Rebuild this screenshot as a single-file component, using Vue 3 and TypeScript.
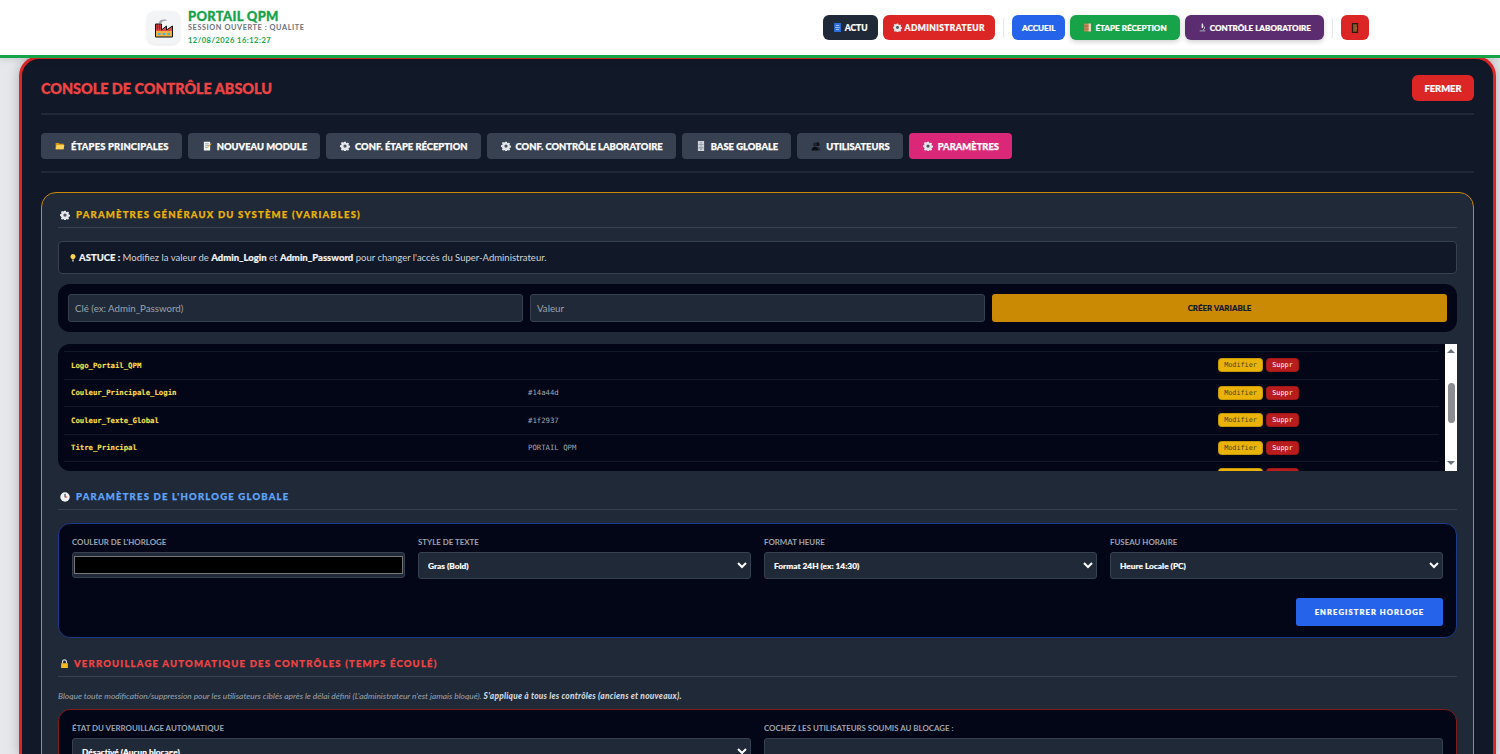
<script setup lang="ts">
const navLeft = [
  { label: 'ACTU', icon: 'news', cls: 'nav-dark' },
  { label: 'ADMINISTRATEUR', icon: 'gear', cls: 'nav-red wide' },
]
const navMain = [
  { label: 'ACCUEIL', icon: '', cls: 'nav-blue' },
  { label: 'ÉTAPE RÉCEPTION', icon: 'books', cls: 'nav-green' },
  { label: 'CONTRÔLE LABORATOIRE', icon: 'scope', cls: 'nav-purple' },
]
const tabs = [
  { label: 'ÉTAPES PRINCIPALES', icon: 'folder' },
  { label: 'NOUVEAU MODULE', icon: 'memo' },
  { label: 'CONF. ÉTAPE RÉCEPTION', icon: 'gear' },
  { label: 'CONF. CONTRÔLE LABORATOIRE', icon: 'gear' },
  { label: 'BASE GLOBALE', icon: 'cabinet' },
  { label: 'UTILISATEURS', icon: 'bust' },
  { label: 'PARAMÈTRES', icon: 'gear', active: true },
]
// last row is cut by the bottom of the box, only its buttons peek out
const variables = [
  { key: 'Logo_Portail_QPM', value: '', cut: false },
  { key: 'Couleur_Principale_Login', value: '#14a44d', cut: false },
  { key: 'Couleur_Texte_Global', value: '#1f2937', cut: false },
  { key: 'Titre_Principal', value: 'PORTAIL QPM', cut: false },
  { key: 'row-5', value: '', cut: true },
]
const clockSelects = [
  { label: 'STYLE DE TEXTE', value: 'Gras (Bold)' },
  { label: 'FORMAT HEURE', value: 'Format 24H (ex: 14:30)' },
  { label: 'FUSEAU HORAIRE', value: 'Heure Locale (PC)' },
]
</script>

<template>
  <svg class="defs" aria-hidden="true">
    <symbol id="gear" viewBox="0 0 16 16">
      <path fill="#e5e7eb" d="M6.7 1h2.6l.4 1.9 1.3.6 1.7-1 1.8 1.8-1 1.7.6 1.3 1.9.4v2.600l-1.900.4-.6 1.300 1 1.700-1.800 1.800-1.700-1-1.300.6-.4 1.900H6.700l-.4-1.900-1.300-.6-1.700 1-1.800-1.800 1-1.700-.6-1.300L0 9.300V6.700l1.900-.4.6-1.300-1-1.700 1.800-1.800 1.700 1 1.300-.6z" />
      <circle cx="8" cy="8" r="2.6" fill="#4b5563" />
    </symbol>
    <symbol id="folder" viewBox="0 0 16 16">
      <path fill="#d99a1c" d="M1 3h5l1.500 1.500H14V13H1z" />
      <path fill="#fbd25a" d="M2.500 6.500H15L13.600 13H1z" />
    </symbol>
    <symbol id="memo" viewBox="0 0 16 16">
      <path fill="#f3f4f6" d="M3 1h10v14H3z" />
      <path stroke="#6b7280" d="M5 4.500h6M5 7.500h6M5 10.500h4" />
      <path fill="#f5b32f" d="M14.500 3.500l1 1L9 11l-1.500.5L8 10z" />
    </symbol>
    <symbol id="cabinet" viewBox="0 0 16 16">
      <path fill="#d1d5db" d="M3 0h10v16H3z" />
      <path fill="#6b7280" d="M4 5h8v1H4zM4 10.500h8v1H4z" />
      <path fill="#374151" d="M7 2.500h2v1H7zM7 7.500h2v1H7zM7 12.500h2v1H7z" />
    </symbol>
    <symbol id="bust" viewBox="0 0 16 16">
      <circle cx="10.500" cy="5" r="3" fill="#0b0f17" />
      <circle cx="6.500" cy="5.500" r="3.300" fill="#1f2430" />
      <path fill="#0b0f17" d="M1 15c0-4 2-6 5.500-6s5.500 2 5.500 6z" />
      <path fill="#1f2430" d="M12 15h3c0-3-1-5-3.500-5.500 .4 1.500.5 3.500.5 5.500z" />
    </symbol>
    <symbol id="news" viewBox="0 0 16 16">
      <path fill="#2f6fdc" d="M2 0h12v16H2z" />
      <path fill="#bcd7fb" d="M5 4h6v1.500H5zM4 7h8v1.500H4zM5 10.500h6V12H5z" />
    </symbol>
    <symbol id="books" viewBox="0 0 16 16">
      <path fill="#c9875a" d="M2 1h11v14H2z" />
      <path fill="#f2d8c0" d="M10 1h4v14h-4z" />
      <path fill="#8c5a3a" d="M2 5h8v1H2zM2 10h8v1H2z" />
    </symbol>
    <symbol id="scope" viewBox="0 0 16 16">
      <path fill="#e5e7eb" d="M6.500 1h2.500v8H6.500z" />
      <path fill="none" stroke="#e5e7eb" stroke-width="1.300" d="M9.500 5c3 1.500 3 6-.5 7.500" />
      <path fill="#9ca3af" d="M3 13h10v2H3z" />
    </symbol>
    <symbol id="door" viewBox="0 0 16 16">
      <path fill="#2b1a12" d="M3 0h10v16H3z" />
      <path fill="#8a5a2b" d="M5 2h6v12H5z" />
      <path fill="#f0b429" d="M9.500 7.500h1v1.500h-1z" />
    </symbol>
    <symbol id="bulb" viewBox="0 0 16 16">
      <path fill="#fbd34d" d="M8 0a5 5 0 0 1 3 9c-.7.600-1 1-1 2H6c0-1-.3-1.400-1-2A5 5 0 0 1 8 0z" />
      <path fill="#9ca3af" d="M6 12h4v3H6z" />
    </symbol>
    <symbol id="clock" viewBox="0 0 16 16">
      <circle cx="8" cy="8" r="7.500" fill="#f3f4f6" />
      <path stroke="#111827" stroke-width="1.500" d="M8 3v5.500" />
      <path stroke="#dc2626" stroke-width="1.500" d="M8 8h3.500" />
    </symbol>
    <symbol id="lock" viewBox="0 0 16 16">
      <path fill="none" stroke="#d1d5db" stroke-width="2" d="M4.500 8V5a3.500 3.500 0 0 1 7 0v3" />
      <path fill="#f5b81f" d="M2 7.500h12V16H2z" />
    </symbol>
  </svg>

  <header class="topbar">
    <div class="brand">
      <div class="logo">
        <svg viewBox="0 0 20 20" width="20" height="20">
          <path fill="#e5484d" d="M1.500 6h6v6h11v7h-17z" />
          <path stroke="#7f1d1d" stroke-width=".6" fill="none" d="M1.500 8h6M1.500 10h6M3.500 6v6M5.500 6v6" />
          <path fill="#e5484d" d="M7.500 12l5-4v4l6-4v5h-11z" />
          <path fill="#f4b23c" d="M1.500 13h17v6h-17z" />
          <path fill="#3fb6e8" d="M4 15h2.500v2H4zM8.800 15h2.500v2H8.800zM13.500 15H16v2h-2.500z" />
          <path fill="none" stroke="#111" stroke-width="1" d="M1.500 6h6v6l5-4v4l6-4v11h-17z" />
          <path fill="#9ca3af" d="M5 5c0-3 3-4 7-3.500l1 1.500c-3-.5-5 .500-5.500 2z" />
        </svg>
      </div>
      <div class="brand-text">
        <div class="brand-name">PORTAIL QPM</div>
        <div class="brand-session">SESSION OUVERTE : QUALITE</div>
        <div class="brand-date">12/08/2026 16:12:27</div>
      </div>
    </div>
    <nav class="nav">
      <button v-for="b in navLeft" :key="b.label" class="nav-btn" :class="b.cls">
        <svg class="ico"><use :href="'#' + b.icon" /></svg>{{ b.label }}
      </button>
      <span class="nav-sep"></span>
      <button v-for="b in navMain" :key="b.label" class="nav-btn" :class="b.cls">
        <svg v-if="b.icon" class="ico"><use :href="'#' + b.icon" /></svg>{{ b.label }}
      </button>
      <span class="nav-sep"></span>
      <button class="nav-btn nav-red nav-door" aria-label="Quitter">
        <svg class="ico door"><use href="#door" /></svg>
      </button>
    </nav>
  </header>

  <main class="console">
    <div class="console-head">
      <h1>CONSOLE DE CONTRÔLE ABSOLU</h1>
      <button class="close-btn">FERMER</button>
    </div>

    <div class="tabs">
      <button v-for="t in tabs" :key="t.label" class="tab" :class="{ active: t.active }">
        <svg class="tab-ico"><use :href="'#' + t.icon" /></svg>{{ t.label }}
      </button>
    </div>

    <section class="panel">
      <h2 class="section-title gold">
        <svg class="title-ico"><use href="#gear" /></svg>PARAMÈTRES GÉNÉRAUX DU SYSTÈME (VARIABLES)
      </h2>

      <div class="tip">
        <svg class="tip-ico"><use href="#bulb" /></svg>
        <b>ASTUCE :</b>&nbsp;Modifiez la valeur de&nbsp;<b>Admin_Login</b>&nbsp;et&nbsp;<b>Admin_Password</b>&nbsp;pour changer l'accès du Super-Administrateur.
      </div>

      <div class="var-form">
        <input class="field" type="text" placeholder="Clé (ex: Admin_Password)" />
        <input class="field" type="text" placeholder="Valeur" />
        <button class="create-btn">CRÉER VARIABLE</button>
      </div>

      <div class="var-box">
        <div class="var-list">
          <div v-for="v in variables" :key="v.key" class="var-row">
            <span class="var-key">{{ v.cut ? '' : v.key }}</span>
            <span class="var-value">{{ v.value }}</span>
            <span class="var-actions">
              <button class="mini mini-edit">{{ v.cut ? '' : 'Modifier' }}</button>
              <button class="mini mini-del">{{ v.cut ? '' : 'Suppr' }}</button>
            </span>
          </div>
        </div>
        <div class="scrollbar">
          <span class="arrow up"></span>
          <span class="thumb"></span>
          <span class="arrow down"></span>
        </div>
      </div>

      <h2 class="section-title blue spaced">
        <svg class="title-ico"><use href="#clock" /></svg>PARAMÈTRES DE L'HORLOGE GLOBALE
      </h2>

      <div class="sub-box clock-box">
        <div class="clock-grid">
          <label class="ctl">
            <span class="ctl-label">COULEUR DE L'HORLOGE</span>
            <input class="color" type="color" value="#000000" />
          </label>
          <label v-for="s in clockSelects" :key="s.label" class="ctl">
            <span class="ctl-label">{{ s.label }}</span>
            <select class="select">
              <option>{{ s.value }}</option>
            </select>
          </label>
        </div>
        <div class="clock-actions">
          <button class="save-btn">ENREGISTRER HORLOGE</button>
        </div>
      </div>

      <h2 class="section-title red spaced lock-title">
        <svg class="title-ico lock"><use href="#lock" /></svg>VERROUILLAGE AUTOMATIQUE DES CONTRÔLES (TEMPS ÉCOULÉ)
      </h2>

      <p class="note">
        Bloque toute modification/suppression pour les utilisateurs ciblés après le délai défini (L'administrateur n'est jamais bloqué).
        <b>S'applique à tous les contrôles (anciens et nouveaux).</b>
      </p>

      <div class="sub-box lock-box">
        <div class="lock-grid">
          <label class="ctl">
            <span class="ctl-label">ÉTAT DU VERROUILLAGE AUTOMATIQUE</span>
            <select class="select">
              <option>Désactivé (Aucun blocage)</option>
            </select>
          </label>
          <div class="ctl">
            <span class="ctl-label">COCHEZ LES UTILISATEURS SOUMIS AU BLOCAGE :</span>
            <div class="user-list"></div>
          </div>
        </div>
      </div>
    </section>
  </main>
</template>

<style scoped>
* {
  box-sizing: border-box;
}

.defs {
  position: absolute;
  width: 0;
  height: 0;
}

.topbar {
  position: relative;
  z-index: 2;
  height: 58px;
  display: flex;
  justify-content: space-between;
  align-items: center;
  padding: 0 131px 0 147px;
  background: #fff;
  border-bottom: 3px solid #16a34a;
  box-shadow: 0 2px 6px rgba(0, 0, 0, 0.1);
}

.brand {
  display: flex;
  align-items: center;
  gap: 8px;
}

.logo {
  width: 33px;
  height: 33px;
  display: flex;
  align-items: center;
  justify-content: center;
  background: #f3f4f6;
  border-radius: 8px;
  box-shadow: 0 1px 3px rgba(0, 0, 0, 0.1);
}

.brand-name {
  color: #16a34a;
  font-size: 13px;
  line-height: 13px;
  font-weight: 900;
  letter-spacing: 0.3px;
  -webkit-text-stroke: 0.3px;
}

.brand-session {
  color: #6b7280;
  font-size: 7.3px;
  line-height: 10px;
  font-weight: 700;
  letter-spacing: 0.6px;
}

.brand-date {
  margin-top: 3px;
  color: #16a34a;
  font-size: 7.5px;
  line-height: 10px;
  font-weight: 700;
  letter-spacing: 0.5px;
}

.nav {
  display: flex;
  align-items: center;
  gap: 5px;
}

.nav-btn {
  height: 25px;
  display: flex;
  align-items: center;
  gap: 3px;
  padding: 0 10px;
  border: none;
  border-radius: 6px;
  color: #fff;
  font-family: inherit;
  font-size: 8.1px;
  font-weight: 900;
  white-space: nowrap;
  -webkit-text-stroke: 0.2px;
}

.nav-btn.wide {
  font-size: 8.5px;
  letter-spacing: 0.4px;
}

.nav-dark {
  background: #1f2937;
  font-size: 8.5px;
}

.nav-red {
  background: #dc2626;
}

.nav-blue {
  background: #2563eb;
}

.nav-green {
  padding: 0 13px;
  background: #16a34a;
  box-shadow: 0 2px 5px rgba(0, 0, 0, 0.18);
}

.nav-purple {
  padding: 0 13px;
  background: #5b2c6f;
  box-shadow: 0 2px 5px rgba(0, 0, 0, 0.18);
}

.nav-door {
  width: 28px;
  justify-content: center;
  padding: 0;
}

.nav-sep {
  width: 1px;
  height: 20px;
  margin: 0 3px;
  background: #e5e7eb;
}

.ico {
  width: 9px;
  height: 9px;
  flex: none;
}

.ico.door {
  width: 10px;
  height: 12px;
}

.console {
  position: relative;
  width: 1477px;
  height: 700px;
  margin: -2px 0 0 19px;
  padding: 16px 19px 0;
  overflow: hidden;
  background: #111827;
  border: 3px solid #dc2626;
  border-bottom: none;
  border-radius: 20px 20px 0 0;
  box-shadow: 0 0 12px rgba(0, 0, 0, 0.25);
}

.console-head {
  display: flex;
  justify-content: space-between;
  align-items: center;
  padding-bottom: 12px;
  border-bottom: 2px solid #1f2937;
}

.console-head h1 {
  margin: 0;
  color: #ef4444;
  font-size: 14.4px;
  font-weight: 900;
  -webkit-text-stroke: 0.35px;
}

.close-btn {
  width: 62px;
  height: 26px;
  border: none;
  border-radius: 6px;
  background: #dc2626;
  color: #fff;
  font-family: inherit;
  font-size: 9.4px;
  font-weight: 900;
  -webkit-text-stroke: 0.2px;
}

.tabs {
  display: flex;
  gap: 6px;
  padding: 18px 0 12px;
  border-bottom: 2px solid #1f2937;
}

.tab {
  height: 26px;
  display: flex;
  align-items: center;
  gap: 5px;
  padding: 0 13px 0 14px;
  border: none;
  border-radius: 4px;
  background: #374151;
  color: #fff;
  font-family: inherit;
  font-size: 9.4px;
  font-weight: 900;
  white-space: nowrap;
  -webkit-text-stroke: 0.25px;
}

.tab:first-child {
  gap: 6px;
  letter-spacing: 0.2px;
}

.tab.active {
  background: #db2777;
}

.tab-ico {
  width: 10px;
  height: 10px;
  flex: none;
}

.panel {
  margin-top: 19px;
  padding: 16px;
  background: #1f2937;
  border: 1px solid #ca8a04;
  border-radius: 15px;
}

.section-title {
  display: flex;
  align-items: center;
  gap: 6px;
  height: 19px;
  margin: 0 0 13px;
  padding: 0 0 7px 2px;
  border-bottom: 1px solid #374151;
  font-size: 9.5px;
  line-height: 12px;
  font-weight: 900;
  letter-spacing: 1.2px;
  -webkit-text-stroke: 0.25px;
}

.section-title.spaced {
  margin-top: 20px;
}

.section-title.lock-title {
  gap: 5px;
}

.gold {
  color: #eab308;
}

.blue {
  color: #60a5fa;
}

.red {
  color: #ef4444;
}

.title-ico {
  width: 10px;
  height: 10px;
  flex: none;
}

.title-ico.lock {
  width: 9px;
  height: 11px;
}

.tip {
  display: flex;
  align-items: center;
  height: 33px;
  margin-bottom: 10px;
  padding: 0 10px;
  background: #111827;
  border: 1px solid #374151;
  border-radius: 4px;
  color: #d1d5db;
  font-size: 9.5px;
  white-space: nowrap;
}

.tip b {
  color: #f3f4f6;
  font-weight: 900;
  -webkit-text-stroke: 0.15px;
}

.tip-ico {
  width: 8px;
  height: 10px;
  margin-right: 2px;
  flex: none;
}

.var-form {
  display: grid;
  grid-template-columns: 1fr 1fr 1fr;
  gap: 7px;
  height: 48px;
  margin-bottom: 12px;
  padding: 10px;
  background: #020617;
  border-radius: 12px;
}

.field {
  height: 28px;
  padding: 0 6px;
  background: #1f2937;
  border: 1px solid #374151;
  border-radius: 3px;
  color: #fff;
  font-family: inherit;
  font-size: 9.7px;
  outline: none;
}

.field::placeholder {
  color: #9ca3af;
}

.create-btn {
  height: 28px;
  border: none;
  border-radius: 3px;
  background: #ca8a04;
  color: #111827;
  font-family: inherit;
  font-size: 7.9px;
  font-weight: 900;
  -webkit-text-stroke: 0.15px;
}

.var-box {
  display: flex;
  height: 127px;
  overflow: hidden;
  background: #020617;
  border-radius: 12px 0 0 12px;
}

.var-list {
  flex: 1;
  padding: 7px 6px 0 6px;
  overflow: hidden;
}

.var-row {
  display: grid;
  grid-template-columns: 457px 690px auto;
  align-items: center;
  height: 27.5px;
  padding-left: 7px;
  border-top: 1px solid #111827;
}

.var-key {
  color: #fde047;
  font-family: "DejaVu Sans Mono", monospace;
  font-size: 7.3px;
  font-weight: 700;
  -webkit-text-stroke: 0.1px;
}

.var-value {
  color: #a3a8b2;
  font-family: "DejaVu Sans Mono", monospace;
  font-size: 7.3px;
}

.var-actions {
  display: flex;
  gap: 3px;
}

.mini {
  height: 14px;
  padding: 0;
  border: 1px solid rgba(0, 0, 0, 0.15);
  border-radius: 4px;
  font-family: "DejaVu Sans Mono", monospace;
  font-size: 6.8px;
}

.mini-edit {
  width: 45px;
  background: #eab308;
  color: #4b4516;
}

.mini-del {
  width: 33px;
  background: #b91c1c;
  color: #fff;
}

.scrollbar {
  width: 12px;
  display: flex;
  flex-direction: column;
  align-items: center;
  background: #fff;
}

.arrow {
  width: 0;
  height: 0;
  border-left: 4px solid transparent;
  border-right: 4px solid transparent;
}

.arrow.up {
  margin-top: 5px;
  border-bottom: 4px solid #6b7280;
}

.arrow.down {
  margin-top: 38px;
  border-top: 4px solid #6b7280;
}

.thumb {
  width: 7px;
  height: 40px;
  margin-top: 30px;
  background: #8a8d94;
  border-radius: 4px;
}

.sub-box {
  background: #020617;
  border-radius: 12px;
  padding: 13px;
}

.clock-box {
  height: 115px;
  border: 1px solid #1e3a8a;
}

.lock-box {
  height: 200px;
  border: 1px solid #7f1d1d;
}

.clock-grid {
  display: grid;
  grid-template-columns: repeat(4, 1fr);
  gap: 13px;
}

.lock-grid {
  display: grid;
  grid-template-columns: 1fr 1fr;
  gap: 13px;
}

.ctl {
  display: flex;
  flex-direction: column;
  min-width: 0;
}

.ctl-label {
  height: 15px;
  color: #9ca3af;
  font-size: 7.9px;
  line-height: 10px;
  font-weight: 700;
}

.select {
  width: 100%;
  height: 27px;
  padding: 0 5px;
  background: #1f2937;
  border: 1px solid #374151;
  border-radius: 3px;
  color: #fff;
  font-family: inherit;
  font-size: 8.3px;
  font-weight: 900;
  -webkit-text-stroke: 0.15px;
}

.color {
  width: 100%;
  height: 26px;
  padding: 3px 1px;
  background: #1f2937;
  border: 1px solid #374151;
  border-radius: 3px;
}

.color::-webkit-color-swatch-wrapper {
  padding: 0;
}

.color::-webkit-color-swatch {
  border: 1px solid #767676;
}

.user-list {
  height: 60px;
  background: #1f2937;
  border: 1px solid #374151;
  border-radius: 3px;
}

.clock-actions {
  display: flex;
  justify-content: flex-end;
  margin-top: 19px;
}

.save-btn {
  width: 147px;
  height: 28px;
  border: none;
  border-radius: 3px;
  background: #2563eb;
  color: #fff;
  font-family: inherit;
  font-size: 7.6px;
  font-weight: 900;
  letter-spacing: 1.1px;
  -webkit-text-stroke: 0.2px;
}

.note {
  height: 12px;
  margin: 0 0 7px;
  color: #9ca3af;
  font-size: 8.4px;
  line-height: 12px;
  font-style: italic;
  white-space: nowrap;
}

.note b {
  color: #d1d5db;
  font-weight: 900;
  letter-spacing: 0.22px;
}
</style>

<style>
html,
body {
  height: 100%;
  overflow: hidden;
  background: #e5e7eb;
  font-family: Lato, "Open Sans", sans-serif;
}

body {
  color: #111827;
}
</style>
